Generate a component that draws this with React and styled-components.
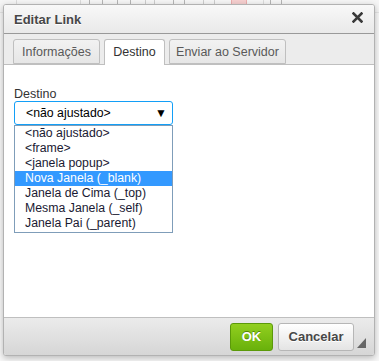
import React from "react";
import styled, { createGlobalStyle } from "styled-components";

const Global = createGlobalStyle`
  html, body { margin: 0; padding: 0; }
  body {
    width: 379px; height: 361px; overflow: hidden;
    background: #f7f7f7;
    font-family: "Liberation Sans", Arial, sans-serif;
  }
`;

const Page = styled.div`
  position: relative;
  width: 379px;
  height: 361px;
  overflow: hidden;
`;

const BackToolbar = styled.div`
  display: flex;
  align-items: flex-start;
  height: 12px;
  padding-left: 16px;
  opacity: 0.45;
  border-bottom: 1px solid #d0d0d0;
  background: #f3f3f3;
`;

const Sep = styled.div`
  width: 1px;
  height: 12px;
  background: #bbb;
  margin: 0 ${(p) => p.$gap || 0}px;
`;

const Spacer = styled.div`
  width: ${(p) => p.$w}px;
`;

const BackIcon = styled.div`
  width: ${(p) => p.$w || 12}px;
  height: 4px;
  margin-right: ${(p) => p.$mr || 14}px;
  border: 1px solid ${(p) => p.$c || "#666"};
  border-top: none;
  background: ${(p) => p.$bg || "transparent"};
`;

const Dialog = styled.div`
  position: absolute;
  left: 3px;
  top: 4px;
  width: 370px;
  height: 350px;
  display: flex;
  flex-direction: column;
  border: 1px solid #b2b2b2;
  border-radius: 3px;
  background: #fff;
  box-shadow: 0 2px 6px rgba(0, 0, 0, 0.25);
  overflow: hidden;
`;

const TitleBar = styled.div`
  height: 28px;
  flex: none;
  display: flex;
  align-items: center;
  justify-content: space-between;
  padding: 0 11px 0 10px;
  background: linear-gradient(#f8f8f8, #e9e9e9);
  border-bottom: 1px solid #999;
`;

const Title = styled.div`
  font-size: 13px;
  font-weight: bold;
  color: #474747;
  text-shadow: 0 1px 0 #fff;
  padding-top: 1px;
`;

const Close = styled.svg`
  width: 11px;
  height: 11px;
  margin-top: -4px;
`;

const TabBar = styled.div`
  height: 30px;
  flex: none;
  display: flex;
  align-items: flex-end;
  gap: 4px;
  padding-left: 9px;
  background: #ececec;
  position: relative;
  z-index: 1;
`;

const Tab = styled.div`
  width: ${(p) => p.$w}px;
  height: ${(p) => (p.$active ? 26 : 25)}px;
  margin-bottom: ${(p) => (p.$active ? -1 : 0)}px;
  box-sizing: border-box;
  display: flex;
  align-items: center;
  justify-content: center;
  font-size: 12.5px;
  color: ${(p) => (p.$active ? "#333" : "#595959")};
  border: 1px solid #bfbfbf;
  border-bottom: ${(p) => (p.$active ? "none" : "1px solid #bfbfbf")};
  border-radius: 3px 3px 0 0;
  background: ${(p) => (p.$active ? "#fff" : "linear-gradient(#f2f2f2, #e6e6e6)")};
  padding-bottom: ${(p) => (p.$active ? 1 : 0)}px;
`;

const Content = styled.div`
  flex: 1;
  border-top: 1px solid #bfbfbf;
  border-bottom: 1px solid #bfbfbf;
  background: #fff;
  padding: 22px 10px 0 10px;
`;

const Label = styled.div`
  font-size: 12.5px;
  color: #333;
  line-height: 14px;
`;

const SelectBox = styled.div`
  width: 159px;
  height: 24px;
  box-sizing: border-box;
  display: flex;
  align-items: center;
  justify-content: space-between;
  padding: 0 5px 0 11px;
  border: 1px solid #139ff7;
  border-radius: 3px;
  font-size: 12.3px;
  color: #000;
`;

const Arrow = styled.span`
  font-size: 12px;
  color: #000;
`;

const List = styled.div`
  width: 159px;
  box-sizing: border-box;
  border: 1px solid #7f9db9;
  padding: 0 0 1px 0;
`;

const Option = styled.div`
  height: 15px;
  line-height: 15px;
  padding-left: 10px;
  font-size: 12.3px;
  color: ${(p) => (p.$sel ? "#fff" : "#1a1a33")};
  background: ${(p) => (p.$sel ? "#3399ff" : "transparent")};
`;

const Footer = styled.div`
  height: 37px;
  flex: none;
  display: flex;
  align-items: center;
  justify-content: flex-end;
  gap: 5px;
  padding-right: 20px;
  background: linear-gradient(#ebebeb, #d6d6d6);
  position: relative;
`;

const Button = styled.div`
  width: ${(p) => p.$w}px;
  height: 28px;
  box-sizing: border-box;
  display: flex;
  align-items: center;
  justify-content: center;
  font-size: 13px;
  font-weight: bold;
  border-radius: 3px;
  border: 1px solid ${(p) => (p.$primary ? "#5b9909" : "#b6b6b6")};
  color: ${(p) => (p.$primary ? "#fff" : "#474747")};
  text-shadow: ${(p) => (p.$primary ? "0 -1px 0 #55830c" : "0 1px 0 #fff")};
  background: ${(p) =>
    p.$primary ? "linear-gradient(#92cf1f, #69b10b)" : "linear-gradient(#fff, #e4e4e4)"};
`;

const Grip = styled.div`
  position: absolute;
  right: 8px;
  bottom: 7px;
  width: 0;
  height: 0;
  border-left: 9px solid transparent;
  border-bottom: 10px solid #666;
`;

const options = [
  "<não ajustado>",
  "<frame>",
  "<janela popup>",
  "Nova Janela (_blank)",
  "Janela de Cima (_top)",
  "Mesma Janela (_self)",
  "Janela Pai (_parent)",
];

export default function App() {
  return (
    <Page>
      <Global />
      <BackToolbar>
        <Sep />
        <Spacer $w={63} />
        <Sep />
        <Spacer $w={8} />
        <BackIcon $w={12} $mr={14} />
        <BackIcon $w={12} $mr={14} />
        <BackIcon $w={8} $mr={18} $c="#999" />
        <BackIcon $w={10} $mr={18} />
        <BackIcon $w={10} $mr={16} $c="#999" />
        <BackIcon $w={14} $mr={10} $c="#d55" $bg="#f3a0a0" />
        <Sep $gap={6} />
        <BackIcon $w={10} $mr={14} />
      </BackToolbar>
      <Dialog>
        <TitleBar>
          <Title>Editar Link</Title>
          <Close viewBox="0 0 11 11">
            <path d="M1.5 1.5 L9.5 9.5 M9.5 1.5 L1.5 9.5" stroke="#3a3a3a" strokeWidth="2.6" strokeLinecap="square" />
          </Close>
        </TitleBar>
        <TabBar>
          <Tab $w={87}>Informações</Tab>
          <Tab $w={61} $active>Destino</Tab>
          <Tab $w={117}>Enviar ao Servidor</Tab>
        </TabBar>
        <Content>
          <Label>Destino</Label>
          <SelectBox>
            <span>&lt;não ajustado&gt;</span>
            <Arrow>▼</Arrow>
          </SelectBox>
          <List>
            {options.map((o, i) => (
              <Option key={o} $sel={i === 3}>
                {o}
              </Option>
            ))}
          </List>
        </Content>
        <Footer>
          <Button $primary $w={43}>OK</Button>
          <Button $w={76}>Cancelar</Button>
          <Grip />
        </Footer>
      </Dialog>
    </Page>
  );
}
